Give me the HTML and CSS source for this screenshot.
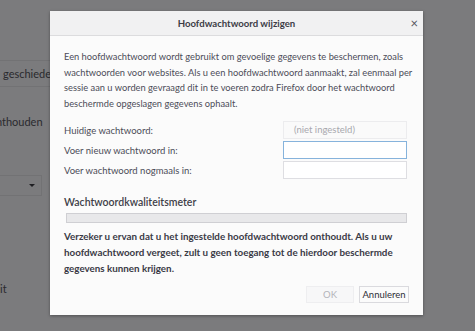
FILE: index.html
```html
<!DOCTYPE html>
<html lang="nl">
<head>
  <meta charset="UTF-8">
  <title>Hoofdwachtwoord wijzigen</title>
  <link rel="stylesheet" href="styles.css">
</head>
<body>
  <div class="page">
    <div class="row row-line">geschiedenis</div>
    <div class="row row-keep">Geschiedenis onthouden</div>
    <div class="select"><span class="caret"></span></div>
    <div class="row row-last">it</div>
  </div>

  <div class="dialog">
    <div class="titlebar">
      <span class="title">Hoofdwachtwoord wijzigen</span>
      <span class="close">&times;</span>
    </div>
    <div class="content">
      <p class="intro">Een hoofdwachtwoord wordt gebruikt om gevoelige gegevens te beschermen, zoals<br>wachtwoorden voor websites. Als u een hoofdwachtwoord aanmaakt, zal eenmaal per<br>sessie aan u worden gevraagd dit in te voeren zodra Firefox door het wachtwoord<br>beschermde opgeslagen gegevens ophaalt.</p>

      <div class="fields">
        <label>Huidige wachtwoord:</label>
        <div class="input disabled">(niet ingesteld)</div>
        <label>Voer nieuw wachtwoord in:</label>
        <div class="input focused"></div>
        <label>Voer wachtwoord nogmaals in:</label>
        <div class="input"></div>
      </div>

      <div class="meter-title">Wachtwoordkwaliteitsmeter</div>
      <div class="meter"></div>

      <p class="warning">Verzeker u ervan dat u het ingestelde hoofdwachtwoord onthoudt. Als u uw<br>hoofdwachtwoord vergeet, zult u geen toegang tot de hierdoor beschermde<br>gegevens kunnen krijgen.</p>

      <div class="buttons">
        <button class="button" disabled>OK</button>
        <button class="button">Annuleren</button>
      </div>
    </div>
  </div>
</body>
</html>
```

FILE: styles.css
```css
body {
  margin: 0;
  background: #7b7b7d;
  font-family: 'Lato', 'Open Sans', sans-serif;
  width: 475px;
  height: 331px;
  overflow: hidden;
  position: relative;
}
.page {
  width: 160px;
  padding-top: 60px;
  color: #2a2a2e;
  font-size: 11px;
  white-space: nowrap;
}
.row {
  height: 25px;
  line-height: 25px;
  padding-left: 3px;
}
.row-line {
  border-top: 1px solid #727274;
  border-bottom: 1px solid #727274;
}
.row-keep {
  margin-top: 22px;
  margin-left: -77px;
  padding-left: 0;
}
.select {
  margin-top: 41px;
  height: 19px;
  border: 1px solid #727274;
  border-left: none;
  width: 41px;
  position: relative;
}
.caret {
  position: absolute;
  right: 6px;
  top: 8px;
  border-left: 3px solid transparent;
  border-right: 3px solid transparent;
  border-top: 3px solid #1e1e22;
}
.row-last {
  margin-top: 80px;
  padding-left: 0;
}

.dialog {
  position: absolute;
  left: 50px;
  top: 11px;
  width: 373px;
  height: 304px;
  background: #fbfbfb;
  box-shadow: 0 1px 3px rgba(0, 0, 0, 0.35);
  color: #4c4c58;
  display: flex;
  flex-direction: column;
}
.titlebar {
  height: 24px;
  background: #f1f1f2;
  border-bottom: 1px solid #dcdcde;
  display: flex;
  align-items: center;
  justify-content: center;
  position: relative;
}
.title {
  font-size: 9.6px;
  font-weight: 700;
  color: #3c3c46;
}
.close {
  position: absolute;
  right: 5px;
  top: 4px;
  font-size: 13px;
  line-height: 16px;
  color: #55555e;
}
.content {
  padding: 13px 14px 0 14px;
  display: flex;
  flex-direction: column;
  flex: 1;
}
.intro {
  margin: 0;
  font-size: 9.3px;
  line-height: 15.5px;
  white-space: nowrap;
}
.fields {
  display: grid;
  grid-template-columns: 1fr 124px;
  grid-auto-rows: 18px;
  row-gap: 2px;
  align-items: center;
  margin-top: 10px;
  padding-right: 2px;
  font-size: 9.5px;
}
.input {
  height: 16px;
  border: 1px solid #dedee2;
  background: #fff;
  padding-left: 10px;
  line-height: 16px;
}
.input.disabled {
  background: #fafafa;
  border-color: #ececee;
  color: #a8a8ae;
}
.input.focused {
  border-color: #86b3dc;
}
.meter-title {
  margin-top: 16px;
  font-size: 10.5px;
  line-height: 14px;
  font-weight: 600;
  color: #3e3e48;
}
.meter {
  margin: 4px 2px 0 2px;
  height: 8px;
  background: #e8e8ea;
  border: 1px solid #cfcfd3;
}
.warning {
  margin: 5px 0 0 0;
  font-size: 9.8px;
  font-weight: 700;
  line-height: 16px;
  color: #3a3a46;
  white-space: nowrap;
}
.buttons {
  margin-top: auto;
  margin-bottom: 12px;
  display: flex;
  justify-content: flex-end;
  gap: 5px;
}
.button {
  font-family: inherit;
  font-size: 9.5px;
  height: 17px;
  padding: 0;
  width: 48px;
  background: #fbfbfb;
  border: 1px solid #e6e6e8;
  color: #2e2e36;
}
.button:disabled {
  color: #b4b4ba;
  background: #f7f7f8;
  border-color: #eeeef0;
}
.button:last-child {
  width: 50px;
  border-color: #dadade;
}
```
